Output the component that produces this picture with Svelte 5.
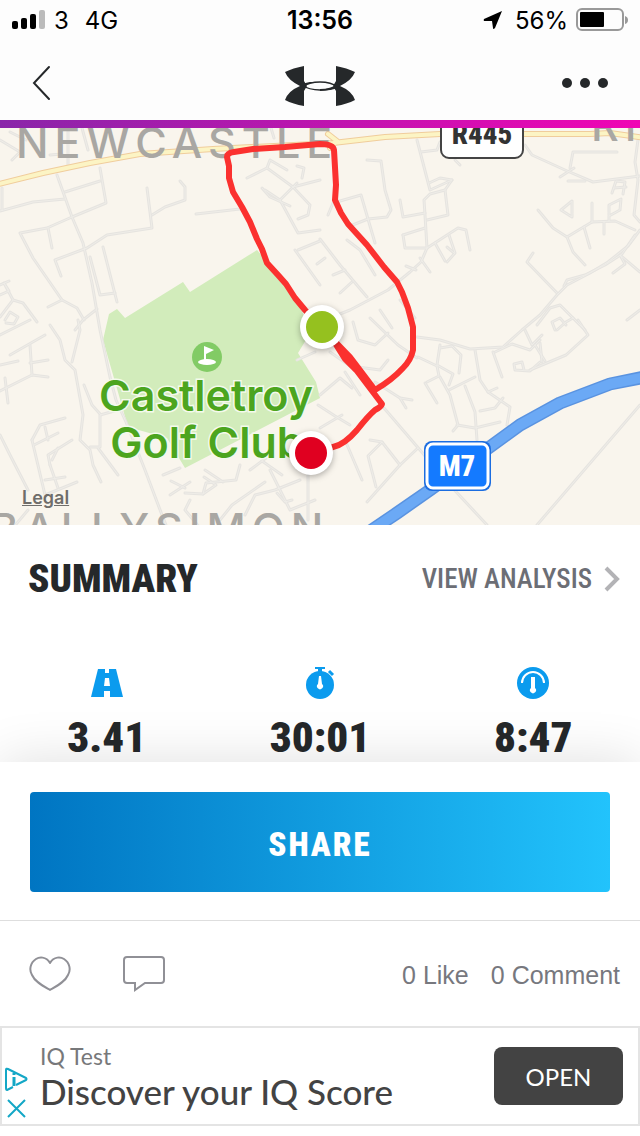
<script>
    const roads = [
        '0,211 33,202 65,199', '2,188 2,210',
        '57,175 72,217 83,243 92,283 100,330 110,377 116,400 126,422 145,470 162,515 166,525',
        '65,192 100,181', '100,168 106,203 72,217 47,228 20,233 33,258 62,300 77,308 84,320',
        '48,307 62,300', '48,228 52,248', '147,188 152,228 107,235 87,248 55,260 61,276',
        '152,215 165,207 185,200 185,187 180,181', '196,214 240,209', '103,247 117,302',
        '90,257 100,295 115,293', '97,309 83,320 75,330', '0,285 9,281', '0,295 9,291 4,283 13,300 23,303 37,322', '0,317 13,300',
        '5,320 10,312 18,317 14,324 6,323', '68,128 68,165', '82,128 88,150', '0,140 20,152 12,160', '10,132 26,140',
        '50,155 62,154', '271,128 274,138', '247,178 267,168 293,187 320,180', '265,190 280,200 298,233 320,230',
        '262,188 270,197 290,206', '280,200 297,183', '293,187 310,205 308,215 298,219', '297,166 304,168 302,178', '267,168 270,160 287,170',
        '295,250 320,285', '298,250 320,241', '317,264 325,258',
        '367,160 381,161 385,190 391,210 387,217 368,219 350,226', '328,215 333,203 361,195 368,219 375,243',
        '417,140 430,190 452,180 440,178 429,183', '452,180 445,190 430,194 424,200 425,215 427,248',
        '400,200 403,217 425,213', '445,190 448,215 427,220', '403,235 425,228', '403,235 405,248 427,248',
        '427,248 458,228 466,230 470,250', '435,243 445,261', '449,235 455,253 447,262', '447,247 454,253',
        '427,248 421,262 410,272 388,290 350,310 330,318', '406,266 416,270', '347,240 360,250 375,275',
        '320,239 340,265 367,297', '333,275 345,270', '340,293 352,282', '420,258 430,272',
        '455,160 460,165', '421,152 437,150 440,142',
        '525,145 532,155 565,170 593,182 640,176', '570,168 573,152 617,152', '560,177 574,168', '568,181 585,181',
        '638,140 635,162 638,180 634,215 640,222', '612,193 616,181 625,182 623,194', '614,188 626,187',
        '538,210 553,228 567,237 592,222 615,221 635,230', '567,237 573,252 585,265', '561,210 572,201 572,217 561,210',
        '592,203 592,222', '609,221 609,205 621,199 620,210 609,216', '604,222 604,234', '584,227 590,248',
        '640,230 628,246 608,262 590,273 567,285 557,295 540,315 522,330 503,347 470,349 440,340 417,337',
        '635,235 622,254 605,265 585,275 567,280 564,286', '533,253 527,262 557,293', '613,273 625,264 620,255 640,272',
        '640,310 627,320', '537,325 550,308 560,305 572,317 585,330',
        '555,330 552,322 560,318 566,325', '475,350 480,380 488,392 510,407 507,425', '480,411 495,408 503,398', '488,392 497,388',
        '440,345 437,365 453,374 449,385', '440,348 452,346 461,355 459,373', '425,383 437,403', '427,382 439,376 437,366 418,357',
        '440,377 450,395 458,425 453,431', '449,390 475,377', '465,386 475,412 477,440', '457,425 475,428 500,422',
        '493,352 502,377', '495,352 512,344 530,350 540,340', '525,330 532,345 542,335', '540,343 542,362', '535,345 545,361',
        '540,362 530,371 515,370 514,364 522,362 524,370', '530,370 566,355 588,335 578,320', '557,330 566,322 573,318',
        '384,408 420,450 447,482 487,525', '418,448 400,465 367,502', '400,465 382,442 368,456 376,487', '345,440 362,480',
        '370,440 382,442', '640,405 537,525', '353,322 358,340 375,345 388,333', '370,318 398,345 417,358',
        '400,300 415,318', '380,310 392,328', '388,360 380,370 350,366 330,352', '345,372 360,395', '320,395 340,378 352,388',
        '375,382 400,398 406,408', '400,398 412,400', '318,405 335,416 350,425', '320,428 342,415',
        '50,325 60,340 65,360 75,370 83,415 80,440 90,450 93,465 101,482', '72,362 80,330 78,320', '90,447 100,447 100,415 125,408',
        '98,448 118,475', '84,385 92,405 101,415', '0,391 32,375 48,377', '10,355 45,335', '30,345 32,375', '30,363 48,360',
        '0,365 18,361', '5,378 8,403', '0,335 30,320', '0,435 10,455 28,490', '32,440 40,425 65,418', '34,445 58,433',
        '45,427 48,440', '32,440 45,495 77,482', '50,465 48,455 72,440', '50,465 58,488', '52,460 58,448', '45,480 65,477',
        '7,535 28,510', '145,450 152,453', '163,475 180,468', '171,481 185,488', '170,495 190,482', '185,493 203,494 206,483 236,480 240,465',
        '190,500 185,510 200,528', '203,494 216,485 204,477', '223,482 205,470', '220,520 232,505 265,482', '245,515 255,495 275,490 300,480',
        '277,493 285,502 292,500', '308,475 308,520', '270,470 290,510 315,500', '250,470 270,455', '262,461 282,475', '297,360 315,352'
    ];

    const mainRoad = 'M-5 185L43 173L90 163L140 154L213 149L333 143L385 137L440 134L590 134L610 133L645 138M328 134L337 141L330 148';
    const motorway = 'M366 534L397 513L430 490L487 449L520 425L560 403L610 384L645 377';
    const route = 'M321 327L305 310L295 298L286 284L278 275L267 263L262 249L257 239L250 222L242 207L233 192L229 178L229 166L227 157Q227 153 234 152L253 149L285 147L320 144Q333 144 334 150L336 185L335 200L341 213L348 224L367 245L384 267L397 282L402 292L408 308L413 327L413 350Q411 360 403 368Q392 380 375 390L350 357L321 327';
    const routeEnd = 'M335 343L345 359L357 371L382 404Q381 407 375 410Q368 416 357 430Q344 445 333 447L311 453';

    const stats = [
        { icon: 'road', value: '3.41', label: 'Distance' },
        { icon: 'watch', value: '30:01', label: 'Duration' },
        { icon: 'gauge', value: '8:47', label: 'Pace' }
    ];
</script>

<div class="app">
    <div class="status">
        <div class="side">
            <svg class="signal" viewBox="0 0 34 22" width="34" height="22" aria-hidden="true">
                <rect x="0" y="12" width="6" height="8" rx="2" />
                <rect x="9" y="9" width="6" height="11" rx="2" />
                <rect x="18" y="5" width="6" height="15" rx="2" />
                <rect x="27" y="1" width="6" height="19" rx="2" fill="#bbb" />
            </svg>
            <span>3</span>
            <span class="network">4G</span>
        </div>
        <time>13:56</time>
        <div class="side right">
            <svg viewBox="0 0 20 20" width="20" height="20" aria-hidden="true">
                <path d="M19 1L1 9Q0 11 2 11L9 11L10 18Q10 20 12 18Z" />
            </svg>
            <span class="percent">56%</span>
            <svg viewBox="0 0 52 24" width="52" height="24" aria-hidden="true">
                <rect x="1" y="1" width="46" height="21" rx="5" fill="none" stroke="#999" stroke-width="2" />
                <rect x="4" y="4" width="24" height="15" rx="1" />
                <path d="M49 8Q52 9 52 12Q52 15 49 16Z" fill="#999" />
            </svg>
        </div>
    </div>

    <header>
        <button class="icon-btn" aria-label="Back">
            <svg viewBox="0 0 20 36" width="20" height="36">
                <path d="M17 2L2 18L17 34" fill="none" stroke="#25282a" stroke-width="2" stroke-linecap="round" />
            </svg>
        </button>
        <svg class="logo" viewBox="0 0 70 40" width="70" height="40" role="img" aria-label="Logo">
            <g fill="#25282a">
                <path d="M19 0Q8 2 0 6Q3 14 15 20Q3 25 0 34Q8 38 19 40L19 25L22 20L19 15Z" />
                <path d="M51 0Q62 2 70 6Q67 14 55 20Q67 25 70 34Q62 38 51 40L51 25L48 20L51 15Z" />
            </g>
            <path d="M17 21Q24 16 35 16Q46 16 53 21Q46 24 35 24Q24 24 17 19Q24 16 35 16" fill="none" stroke="#25282a" stroke-width="1.5" />
            <path d="M53 19Q46 24 35 24" fill="none" stroke="#25282a" stroke-width="2" />
        </svg>
        <button class="icon-btn" aria-label="More options">
            <svg viewBox="0 0 46 12" width="46" height="12" fill="#25282a">
                <circle cx="5" cy="6" r="5" />
                <circle cx="23" cy="6" r="5" />
                <circle cx="41" cy="6" r="5" />
            </svg>
        </button>
    </header>
    <div class="accent"></div>

    <div class="map">
        <svg viewBox="0 128 640 397" role="img" aria-label="Workout route map">
            <rect y="128" width="640" height="397" fill="#f9f5ed" />
            <path fill="#d2ecbb" d="M257 250L190 292L183 282L125 318L117 309L109 314L103 340L128 427L167 438L185 468L320 398L316 382L298 353L312 330L300 308L278 275Z" />

            <g fill="none" stroke-linejoin="round" stroke-linecap="round">
                {#each roads as points}
                    <polyline {points} stroke="#e6e4e0" stroke-width="3" />
                {/each}
                {#each roads as points}
                    <polyline {points} stroke="#efede8" stroke-width="1" />
                {/each}
                <path d={mainRoad} stroke="#f0cd9c" stroke-width="6" />
                <path d={mainRoad} stroke="#fcf4c4" stroke-width="4" />
                <path d={motorway} stroke="#5a93e0" stroke-width="13" />
                <path d={motorway} stroke="#6ba9f5" stroke-width="10" />
            </g>

            <g class="place">
                <text x="16" y="158">NEWCASTLE</text>
                <text x="591" y="141">RI</text>
                <text x="-10" y="544">BALLYSIMON</text>
            </g>

            <g fill="none" stroke="#fb312f" stroke-linejoin="round" stroke-linecap="round">
                <path d={route} stroke-width="6" />
                <path d={routeEnd} stroke-width="6" />
            </g>

            <rect x="441" y="112" width="82" height="46" rx="8" fill="#fff" stroke="#444" stroke-width="2" />
            <text class="shield" x="482" y="144" font-size="29" fill="#333">R445</text>

            <rect x="424" y="441" width="67" height="50" rx="8" fill="#1c6de0" />
            <rect x="427" y="444" width="61" height="44" rx="6" fill="#147aff" stroke="#fff" stroke-width="3" />
            <text class="shield" x="457" y="476" font-size="29" fill="#fff">M7</text>

            <circle cx="207" cy="357" r="15" fill="#82cb65" />
            <g fill="#fff">
                <ellipse cx="207" cy="362" rx="9" ry="3" />
                <path d="M204 346L214 350L206 354L206 363L204 363Z" />
            </g>
            <g class="golf">
                <text x="206" y="411">Castletroy</text>
                <text x="207" y="458">Golf Club</text>
            </g>

            <g class="pin">
                <circle cx="322" cy="327" r="22" fill="#fff" />
                <circle cx="322" cy="327" r="16" fill="#95c11f" />
            </g>
            <g class="pin">
                <circle cx="311" cy="453" r="22" fill="#fff" />
                <circle cx="311" cy="453" r="16" fill="#e00020" />
            </g>
        </svg>
        <a class="legal" href="#legal">Legal</a>
    </div>

    <section class="summary">
        <div class="summary-head">
            <h2>SUMMARY</h2>
            <a href="#analysis">
                VIEW ANALYSIS
                <svg viewBox="0 0 16 26" width="16" height="26" aria-hidden="true">
                    <path d="M2 2L13 13L2 24" fill="none" stroke="#b3b3b6" stroke-width="4" />
                </svg>
            </a>
        </div>
        <div class="stats">
            {#each stats as stat}
                <div class="stat">
                    <svg viewBox="0 0 34 34" width="34" height="34" fill="#0b9bee" role="img" aria-label={stat.label}>
                        {#if stat.icon === 'road'}
                            <path d="M8 3H15V6H19V3H26L33 31H20V25H14V31H1Z" />
                            <path d="M15 12H19L20 20H14Z" fill="#fff" />
                            <path d="M15 3H19V7H15Z" fill="#fff" />
                        {:else if stat.icon === 'watch'}
                            <circle cx="17" cy="19" r="14" />
                            <path d="M12 1H22V3H19V7H15V3H12Z" />
                            <path d="M26 5L30 9" stroke="#0b9bee" stroke-width="3" />
                            <path d="M16 10H18L19 18A3 3 0 1 1 15 18Z" fill="#fff" />
                        {:else}
                            <circle cx="17" cy="17" r="16" />
                            <path d="M6 17A11 11 0 0 1 28 17" fill="none" stroke="#fff" stroke-width="2" />
                            <path d="M15 11H19V22A3 3 0 1 1 15 22Z" fill="#fff" />
                        {/if}
                    </svg>
                    <strong>{stat.value}</strong>
                </div>
            {/each}
        </div>
    </section>

    <div class="share-panel">
        <button class="share">SHARE</button>
    </div>

    <div class="social">
        <button class="icon-btn" aria-label="Like">
            <svg viewBox="0 0 42 36" width="42" height="36">
                <path d="M21 7C17 0 10 1 7 3C1 7 0 14 3 19C6 26 14 30 21 34C28 30 36 26 39 19C42 14 41 7 35 3C32 1 25 0 21 7Z" fill="none" stroke="#909096" stroke-width="2" stroke-linejoin="round" />
            </svg>
        </button>
        <button class="icon-btn comment" aria-label="Comment">
            <svg viewBox="0 0 42 36" width="42" height="36">
                <path d="M4 1H38Q41 1 41 4V24Q41 27 38 27H22L12 34V27H4Q1 27 1 24V4Q1 1 4 1Z" fill="none" stroke="#909096" stroke-width="2" />
            </svg>
        </button>
        <div class="counts">
            <span>0 Like</span>
            <span>0 Comment</span>
        </div>
    </div>

    <aside class="ad">
        <div class="ad-controls">
            <button class="icon-btn" aria-label="Ad information">
                <svg viewBox="0 0 24 26" width="24" height="26" fill="none" stroke="#13a7c6" stroke-width="2" stroke-linejoin="round">
                    <path d="M9 21L3 24Q2 24 2 22V4Q2 2 4 3L22 12Q23 13 22 14L12 19" />
                    <path d="M10 11V20M10 7V9" stroke-width="3" />
                </svg>
            </button>
            <button class="icon-btn" aria-label="Close ad">
                <svg viewBox="0 0 24 26" width="24" height="26" fill="none" stroke="#13a7c6" stroke-width="2">
                    <path d="M4 4L21 21M21 4L4 21" />
                </svg>
            </button>
        </div>
        <div class="ad-text">
            <span>IQ Test</span>
            <strong>Discover your IQ Score</strong>
        </div>
        <button class="open">OPEN</button>
    </aside>
</div>

<style>
    :global(body) {
        margin: 0;
        background: #fff;
    }

    .app {
        font-family: "Liberation Sans", Arial, sans-serif;
        color: #25282a;
        background: #fff;
        overflow: hidden;
    }

    button {
        font: inherit;
        border: 0;
        padding: 0;
        cursor: pointer;
    }

    svg {
        display: block;
        flex: none;
    }

    .icon-btn {
        background: none;
    }

    .status {
        display: flex;
        align-items: center;
        height: 40px;
        padding: 0 12px;
        font-family: Inter, sans-serif;
        font-size: 24px;
        color: #000;
        background: #fdfdfd;
    }

    .side {
        display: flex;
        align-items: center;
        flex: 1;
        gap: 8px;
    }

    .right {
        justify-content: flex-end;
    }

    .network {
        margin-left: 8px;
    }

    .percent {
        margin-left: 4px;
    }

    time {
        font-size: 25px;
        font-weight: 600;
    }

    header {
        display: flex;
        align-items: center;
        justify-content: space-between;
        height: 80px;
        padding: 0 32px;
        background: #fdfdfd;
    }

    header .logo {
        margin-left: 26px;
        margin-top: 12px;
    }

    header .icon-btn {
        margin-top: 6px;
    }

    .accent {
        height: 8px;
        background: linear-gradient(90deg, #8a25a9, #f005b4);
    }

    .map {
        position: relative;
    }

    .map > svg {
        width: 100%;
        height: auto;
    }

    .place {
        font: 500 43px Inter, sans-serif;
        letter-spacing: 6px;
        fill: #a9a7a3;
    }

    .shield {
        font-family: "Roboto Condensed", "Liberation Sans Narrow", Roboto, sans-serif;
        font-weight: 800;
        text-anchor: middle;
    }

    .golf {
        font: 600 43px Inter, sans-serif;
        text-anchor: middle;
        fill: #4ca51e;
        stroke: #f4faec;
        stroke-width: 3px;
        paint-order: stroke;
    }

    .pin {
        filter: drop-shadow(0 2px 3px rgba(0, 0, 0, 0.3));
    }

    .legal {
        position: absolute;
        left: 22px;
        bottom: 16px;
        font: 600 18px/22px Inter, sans-serif;
        color: #6f6d6a;
    }

    .summary {
        padding: 24px 20px 0 28px;
    }

    .summary-head {
        display: flex;
        align-items: center;
        justify-content: space-between;
    }

    h2,
    .summary-head a,
    .stat strong,
    .share {
        font-family: "Roboto Condensed", "Liberation Sans Narrow", Roboto, sans-serif;
    }

    h2 {
        margin: 0;
        font-size: 39px;
        line-height: 60px;
        font-weight: 900;
    }

    .summary-head a {
        display: flex;
        align-items: center;
        gap: 12px;
        font-size: 27px;
        font-weight: 500;
        color: #6c6e75;
        text-decoration: none;
    }

    .stats {
        display: flex;
        margin: 57px -20px 0 -28px;
    }

    .stat {
        display: flex;
        flex-direction: column;
        align-items: center;
        flex: 1;
    }

    .stat strong {
        margin-top: 12px;
        font-size: 43px;
        font-weight: 900;
        line-height: 50px;
    }

    .share-panel {
        position: relative;
        padding: 30px 30px 28px;
        background: #fff;
        border-bottom: 1px solid #dedede;
        box-shadow: 0 -2px 50px rgba(0, 0, 0, 0.12);
        clip-path: inset(-60px 0 0 0);
    }

    .share {
        display: block;
        width: 100%;
        height: 100px;
        padding-top: 4px;
        border-radius: 4px;
        background: linear-gradient(90deg, #0075c2, #22c3fc);
        color: #fff;
        font-size: 33px;
        font-weight: 900;
        letter-spacing: 2px;
    }

    .social {
        display: flex;
        align-items: center;
        height: 105px;
        padding: 0 20px 0 29px;
    }

    .comment {
        margin-left: 52px;
    }

    .counts {
        display: flex;
        gap: 22px;
        margin-left: auto;
        padding-top: 4px;
        font-size: 25px;
        color: #77787e;
    }

    .ad {
        display: flex;
        align-items: center;
        height: 96px;
        padding-right: 15px;
        border: 2px solid #e4e4e4;
        font-family: Lato, sans-serif;
    }

    .ad-controls {
        display: flex;
        flex-direction: column;
        align-self: flex-end;
        gap: 4px;
        padding: 0 12px 2px 2px;
    }

    .ad-text {
        display: flex;
        flex-direction: column;
        flex: 1;
        font-size: 23px;
        line-height: 30px;
        color: #77787a;
    }

    .ad-text strong {
        font-size: 35px;
        line-height: 40px;
        font-weight: 500;
        color: #434343;
    }

    .open {
        width: 129px;
        height: 58px;
        border-radius: 8px;
        background: #434343;
        color: #fff;
        font-size: 24px;
    }
</style>
